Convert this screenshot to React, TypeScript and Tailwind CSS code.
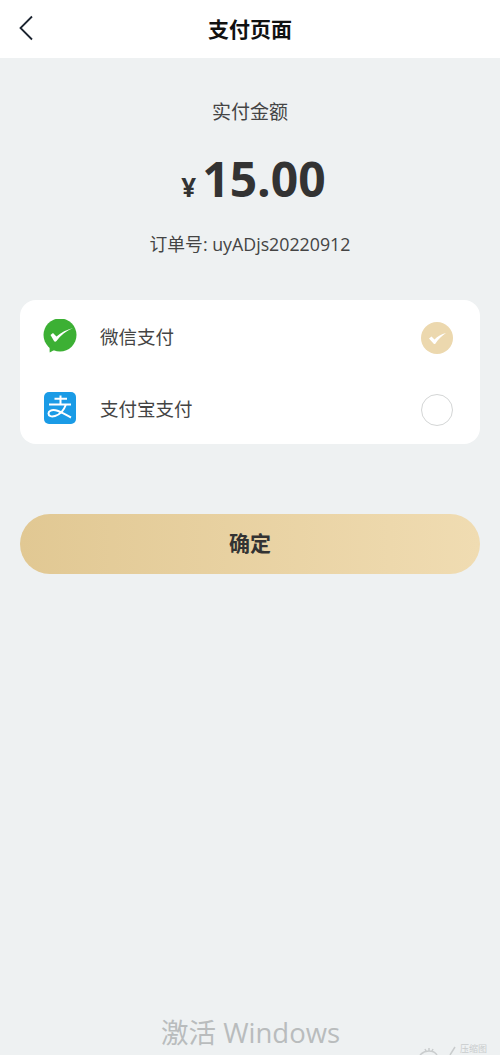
function WechatIcon() {
  return (
    <svg width="34" height="34" viewBox="0 0 34 34" className="shrink-0">
      <circle cx="17" cy="16" r="16.500" fill="#3cb034" />
      <path d="M6.500 25l.2 8.500 7.300-4z" fill="#3cb034" />
      <path d="M7.500 16l2.500-2 3.500 3.500C18 13.500 24 10.500 30 9c-7 3-12.500 7.500-16.500 13-.9 1-2 .9-2.500 0z" fill="#fff" />
    </svg>
  );
}

function AlipayIcon() {
  return (
    <svg width="32" height="32" viewBox="0 0 32 32" className="shrink-0">
      <rect width="32" height="32" rx="5" fill="#1a9be6" />
      <path
        d="M10.500 6.800h12.500M16.500 3.500v9M5 12.500h22M22 12.500c-2 5.500-6 10-11 11.500-3.500 1-6.500.2-6.500-2.500 0-2.800 3.500-4 7-3.200 5 1.100 10 4.500 15.500 7.200"
        fill="none"
        stroke="#fff"
        strokeWidth="2"
      />
    </svg>
  );
}

export default function App() {
  return (
    <div className="relative flex min-h-[1055px] flex-col overflow-hidden bg-[#eef1f2] font-['Open_Sans','Noto_Sans_CJK_SC',sans-serif]">
      {/* Header */}
      <div className="relative flex h-[58px] items-center justify-center bg-white pt-[1px]">
        <svg width="16" height="26" viewBox="0 0 16 26" className="absolute left-[18px] top-[15px]">
          <path d="M14 1.500L2.500 13 14 24.500" fill="none" stroke="#1c2430" strokeWidth="1.800" />
        </svg>
        <span className="text-[21px] font-bold text-[#111111]">支付页面</span>
      </div>

      {/* Amount */}
      <div className="flex flex-col items-center">
        <div className="mt-[40px] text-[19px] leading-[28px] text-[#444444]">实付金额</div>
        <div className="mt-[17px] flex h-[60px] items-baseline pl-[7px] text-[#333333]">
          <span className="mr-[6px] text-[26px] font-bold">¥</span>
          <span className="text-[48px] font-bold">15.00</span>
        </div>
        <div className="mt-[28px] text-[17.800px] leading-[26px] text-[#444444]">订单号: uyADjs20220912</div>
      </div>

      {/* Payment options */}
      <div className="mx-5 mt-[43px] rounded-2xl bg-white">
        <div className="flex h-[72px] items-center pl-[23px] pr-[27px]">
          <WechatIcon />
          <span className="ml-[23px] mt-[2px] flex-1 text-[18.500px] text-[#444444]">微信支付</span>
          <div className="mt-[4px] h-8 w-8 rounded-full bg-[#ecd8ae]">
            <svg width="32" height="32" viewBox="0 0 32 32">
              <path d="M8 16.500l2.500-2 3 3c3-3 7-5.500 11.500-6.500-4 2.500-8 6.500-10.500 10.500-.5.8-1.500.8-2 0z" fill="#fff" />
            </svg>
          </div>
        </div>
        <div className="flex h-[72px] items-center pl-[24px] pr-[27px]">
          <AlipayIcon />
          <span className="ml-[24px] mt-[2px] flex-1 text-[18.500px] text-[#444444]">支付宝支付</span>
          <div className="mt-[4px] h-8 w-8 rounded-full border border-[#d4d6d6] bg-white" />
        </div>
      </div>

      {/* Confirm */}
      <button
        type="button"
        className="mx-5 mt-[70px] h-[60px] rounded-[30px] bg-gradient-to-r from-[#e1c893] to-[#f0dcb2] text-[21px] font-bold text-[#333333]"
      >
        确定
      </button>

      {/* Watermark */}
      <div className="absolute left-[161px] top-[1015px] text-[27.500px] leading-[36px] text-[#b9bcbd]">激活 Windows</div>
      <svg width="42" height="10" viewBox="0 0 42 10" className="absolute left-[416px] top-[1045px]">
        <path d="M4 10c3-3 6-4 9-4s6 1 8 4M13 3v3M9 4l1 2M17 4l-1 2M34 10l5-8" fill="none" stroke="#c9cccd" strokeWidth="1.500" />
      </svg>
      <div className="absolute left-[460px] top-[1043px] text-[9px] leading-[11px] text-[#c9cccd]">压缩图</div>
    </div>
  );
}
